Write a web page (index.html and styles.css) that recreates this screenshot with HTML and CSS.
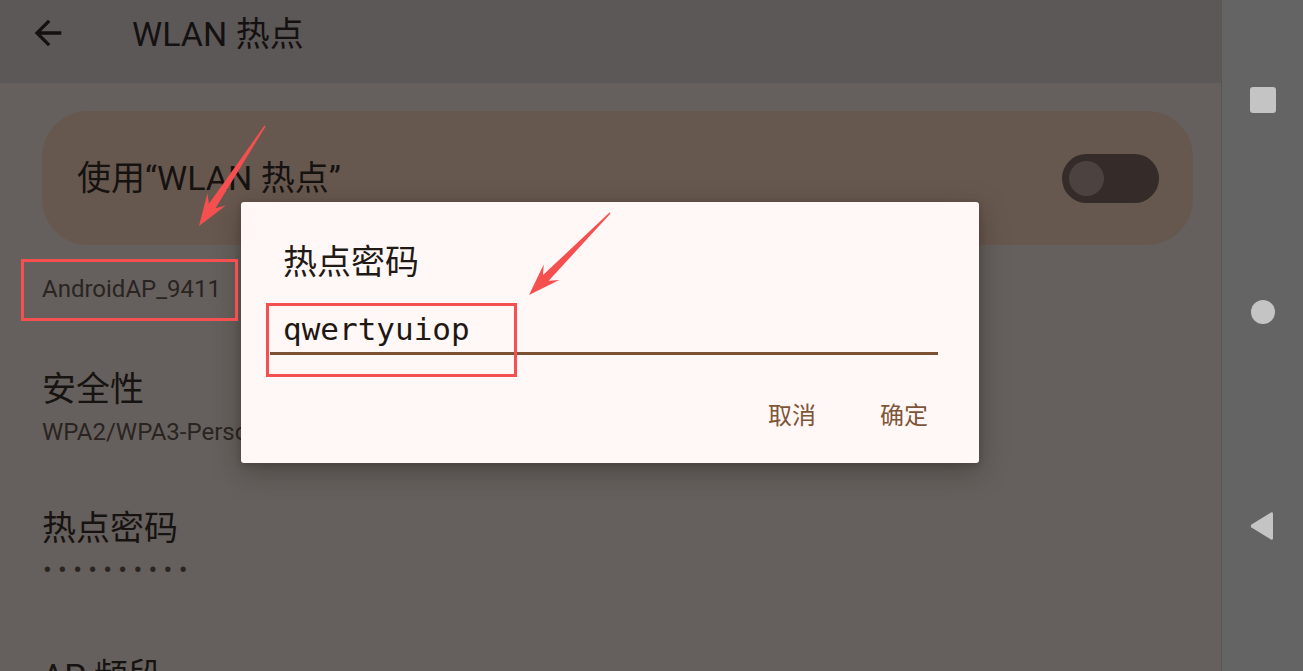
FILE: index.html
```html
<!DOCTYPE html>
<html lang="zh-CN">
<head>
<meta charset="utf-8">
<title>WLAN 热点</title>
<link rel="stylesheet" href="styles.css">
</head>
<body>
<div class="screen">
  <main class="app">
    <header class="topbar">
      <svg class="back" viewBox="0 0 24 24" width="40" height="40"><path d="M20 11H7.83l5.59-5.59L12 4l-8 8 8 8 1.41-1.41L7.83 13H20v-2z" fill="#141110"/></svg>
      <h1 class="title">WLAN 热点</h1>
    </header>
    <section class="content">
      <div class="card">
        <span class="card-label">使用“WLAN 热点”</span>
        <span class="switch"><span class="thumb"></span></span>
      </div>
      <div class="ssid">AndroidAP_9411</div>
      <div class="item item-sec">
        <div class="item-title">安全性</div>
        <div class="item-sub">WPA2/WPA3-Personal</div>
      </div>
      <div class="item item-pw">
        <div class="item-title">热点密码</div>
        <div class="item-dots">••••••••••</div>
      </div>
      <div class="item item-ap">
        <div class="item-title">AP 频段</div>
      </div>
    </section>
  </main>
  <nav class="navbar">
    <span class="nav-square"></span>
    <span class="nav-circle"></span>
    <svg class="nav-back" viewBox="0 0 26 32" width="26" height="32"><path d="M22 2.5 Q24 1.5 24 4 L24 28 Q24 30.5 22 29.5 L2.5 17.5 Q1 16 2.5 14.5 Z" fill="#c4c4c4"/></svg>
  </nav>

  <div class="dialog">
    <div class="dialog-title">热点密码</div>
    <div class="field">qwertyuiop</div>
    <div class="actions">
      <span class="btn">取消</span>
      <span class="btn">确定</span>
    </div>
    <div class="mark mark-field"></div>
  </div>

  <div class="mark mark-ssid"></div>

  <svg class="arrows" width="1303" height="671" viewBox="0 0 1303 671">
    <polygon fill="#f5504f" points="265.6,126.4 215.5,208.2 225.8,205.4 199,226 207.4,193.2 208.9,203.8 264.4,125.6"/>
    <polygon fill="#f5504f" points="610.5,213.5 548.7,280.7 559.3,280 529,295 543.7,264.5 543,275.1 609.5,212.5"/>
  </svg>
</div>
</body>
</html>
```

FILE: styles.css
```css
* { box-sizing: border-box; margin: 0; padding: 0; }
html, body { width: 1303px; height: 671px; overflow: hidden; }
body {
  background: #65605d;
  font-family: Roboto, "Noto Sans CJK SC", sans-serif;
  color: #1a1513;
}
.screen {
  position: relative;
  width: 1303px;
  height: 671px;
  display: flex;
}
.app {
  width: 1222px;
  height: 671px;
  display: flex;
  flex-direction: column;
  background: #65605d;
  border-right: 1px solid #5a5654;
}
.topbar {
  height: 83px;
  flex: none;
  background: #5c5857;
  display: flex;
  align-items: flex-start;
  padding-left: 28px;
}
.back { margin-top: 13px; }
.title {
  margin-left: 64px;
  margin-top: 13px;
  font-weight: 400;
  font-size: 34px;
  line-height: 42px;
  color: #141110;
}
.content {
  flex: 1;
  display: flex;
  flex-direction: column;
  overflow: hidden;
}
.card {
  flex: none;
  margin: 28px 28px 0 42px;
  height: 134px;
  background: #67584f;
  border-radius: 46px;
  display: flex;
  align-items: center;
  justify-content: space-between;
  padding: 0 34px 0 35px;
}
.card-label {
  font-size: 34px;
  line-height: 44px;
  color: #161210;
}
.switch {
  width: 97px;
  height: 49px;
  border-radius: 25px;
  background: #352b29;
  display: flex;
  align-items: center;
  padding-left: 7px;
}
.thumb {
  width: 35px;
  height: 35px;
  border-radius: 50%;
  background: #4c4240;
}
.ssid {
  flex: none;
  margin-top: 14px;
  height: 61px;
  line-height: 61px;
  padding-left: 42px;
  font-size: 24px;
  color: #2a2421;
}
.item { flex: none; padding-left: 42px; }
.item-title {
  font-size: 34px;
  line-height: 44px;
  color: #171311;
  white-space: nowrap;
}
.item-sec { margin-top: 47px; }
.item-sub {
  font-size: 24px;
  line-height: 42px;
  color: #2a2421;
  white-space: nowrap;
}
.item-pw { margin-top: 53px; }
.item-dots {
  font-size: 26px;
  line-height: 40px;
  letter-spacing: 6.3px;
  color: #2a2421;
  padding-left: 1px;
  white-space: nowrap;
}
.item-ap { margin-top: 64px; }

.navbar {
  width: 81px;
  height: 671px;
  background: #656464;
  display: flex;
  flex-direction: column;
  align-items: center;
  padding-top: 87px;
  padding-left: 1px;
}
.nav-square {
  width: 26px;
  height: 26px;
  border-radius: 3px;
  background: #c4c4c4;
}
.nav-circle {
  margin-top: 187px;
  width: 24px;
  height: 24px;
  border-radius: 50%;
  background: #c4c4c4;
}
.nav-back { margin-top: 186px; margin-left: -2px; }

.dialog {
  position: absolute;
  left: 241px;
  top: 202px;
  width: 738px;
  height: 261px;
  background: #fff8f6;
  border-radius: 3px;
  box-shadow: 0 8px 28px rgba(30, 20, 15, 0.35), 0 2px 6px rgba(30, 20, 15, 0.2);
  padding: 38px 41px 0 29px;
}
.dialog-title {
  padding-left: 13px;
  font-size: 34px;
  line-height: 44px;
  color: #221a17;
}
.field {
  margin-top: 22px;
  height: 49px;
  line-height: 46px;
  padding-left: 13px;
  font-family: "DejaVu Sans Mono", monospace;
  font-size: 31px;
  color: #1e1714;
  border-bottom: 3px solid #7b5033;
}
.actions {
  margin-top: 41px;
  display: flex;
  justify-content: flex-end;
  gap: 64px;
  padding-right: 10px;
}
.btn {
  font-size: 24px;
  line-height: 40px;
  color: #7f5538;
}
.mark {
  position: absolute;
  border: 3px solid #f5504f;
}
.mark-field {
  left: 25px;
  top: 101px;
  width: 251px;
  height: 74px;
}
.mark-ssid {
  left: 21px;
  top: 259px;
  width: 217px;
  height: 62px;
}
.arrows {
  position: absolute;
  left: 0;
  top: 0;
  pointer-events: none;
}
```
